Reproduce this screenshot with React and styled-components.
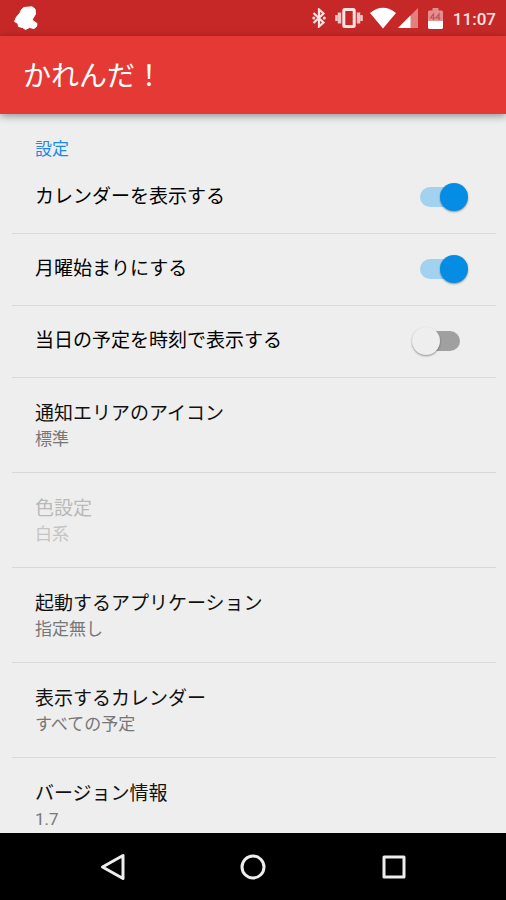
import React, { useState } from "react";
import styled, { createGlobalStyle } from "styled-components";

const GlobalStyle = createGlobalStyle`
  *, *::before, *::after { box-sizing: border-box; }
  body {
    margin: 0;
    background: #eeeeee;
    font-family: Roboto, "Noto Sans CJK JP", sans-serif;
  }
  button { font-family: inherit; }
`;

const Screen = styled.div`
  display: flex;
  flex-direction: column;
  height: 100vh;
  background: #eeeeee;
`;

const StatusBar = styled.div`
  flex: none;
  display: flex;
  align-items: center;
  justify-content: space-between;
  height: 36px;
  padding: 0 10px 0 12px;
  background: #c62828;
  color: #fbe4e4;
`;

const StatusIcons = styled.div`
  display: flex;
  align-items: center;
`;

const StatusIcon = styled.svg`
  display: block;
  margin-right: ${(p) => p.$gap || 0}px;
`;

const Clock = styled.time`
  padding-top: 2px;
  font-size: 17px;
  line-height: 20px;
  font-weight: 500;
`;

const AppBar = styled.header`
  flex: none;
  display: flex;
  align-items: center;
  height: 78px;
  padding: 3px 23px 0;
  background: #e53935;
  box-shadow: 0 2px 8px rgba(0, 0, 0, 0.4);
  z-index: 1;
`;

const AppTitle = styled.h1`
  margin: 0;
  color: #ffffff;
  font-size: 28px;
  line-height: 40px;
  font-weight: 400;
`;

const Settings = styled.main`
  flex: 1;
  min-height: 0;
  overflow: hidden;
  padding: 22px 10px 0 12px;
`;

const SectionTitle = styled.h2`
  margin: 0;
  padding: 0 23px;
  color: #1e88e5;
  font-size: 17px;
  line-height: 26px;
  font-weight: 400;
`;

const List = styled.ul`
  margin: 0;
  padding: 0;
  list-style: none;
`;

const Item = styled.li`
  border-bottom: 1px solid #d8d8d8;
`;

const SwitchRow = styled.label`
  display: flex;
  align-items: center;
  justify-content: space-between;
  height: 71px;
  padding: 0 28px 1px 23px;
  cursor: pointer;
`;

const LinkRow = styled.button`
  display: flex;
  flex-direction: column;
  justify-content: center;
  width: 100%;
  height: 94px;
  padding: 3px 23px 0;
  border: 0;
  background: transparent;
  text-align: left;
  color: #111111;
  cursor: pointer;

  &:disabled {
    color: #b9b9b9;
    cursor: default;
  }
`;

const RowTitle = styled.span`
  font-size: 19px;
  line-height: 26px;
`;

const Summary = styled.span`
  font-size: 17px;
  line-height: 25px;
  color: #777777;

  ${LinkRow}:disabled & {
    color: #c4c4c4;
  }
`;

const Toggle = styled.input`
  appearance: none;
  display: grid;
  align-items: center;
  width: 56px;
  height: 28px;
  margin: 0;
  cursor: pointer;

  &::before,
  &::after {
    content: "";
    grid-area: 1 / 1;
  }
  &::before {
    justify-self: center;
    width: 40px;
    height: 20px;
    border-radius: 10px;
    background: #a0a0a0;
  }
  &::after {
    justify-self: start;
    width: 28px;
    height: 28px;
    border-radius: 50%;
    background: #eeeeee;
    box-shadow: 0 1px 2px rgba(0, 0, 0, 0.4);
  }
  &:checked::before {
    background: #a3d2f1;
  }
  &:checked::after {
    justify-self: end;
    background: #058de5;
  }
`;

const NavBar = styled.nav`
  flex: none;
  display: flex;
  height: 67px;
  padding: 0 42px 0 43px;
  background: #000000;
`;

const NavButton = styled.button`
  flex: 1;
  display: flex;
  align-items: center;
  justify-content: center;
  padding: 0;
  border: 0;
  background: transparent;
  cursor: pointer;
`;

const NavIcon = styled.svg`
  display: block;
  fill: none;
  stroke: #eeeeee;
  stroke-width: 3;
  stroke-linejoin: round;
`;

const switches = [
  { title: "カレンダーを表示する", on: true },
  { title: "月曜始まりにする", on: true },
  { title: "当日の予定を時刻で表示する", on: false },
];

const links = [
  { title: "通知エリアのアイコン", summary: "標準" },
  { title: "色設定", summary: "白系", disabled: true },
  { title: "起動するアプリケーション", summary: "指定無し" },
  { title: "表示するカレンダー", summary: "すべての予定" },
  { title: "バージョン情報", summary: "1.7" },
];

function SwitchItem({ title, on }) {
  const [checked, setChecked] = useState(on);
  return (
    <Item>
      <SwitchRow>
        <RowTitle>{title}</RowTitle>
        <Toggle
          type="checkbox"
          role="switch"
          checked={checked}
          onChange={(e) => setChecked(e.target.checked)}
        />
      </SwitchRow>
    </Item>
  );
}

export default function App() {
  return (
    <Screen>
      <GlobalStyle />
      <StatusBar>
        <StatusIcon width="28" height="28" viewBox="0 0 28 28" aria-hidden="true">
          <path
            d="M9.500 5.500 L12 3.500 L20 2.800 L23 5 L23.500 10 L21.500 13.500 L20 16 L25 19.500 L24.500 22.500 L22 24.500 L17.500 23.500 L13.500 25.500 L10.500 23.500 L6.500 22.500 L6 19.500 L2.500 17.500 L4.500 13 L8 9 Z"
            fill="#ffffff"
            stroke="#ffffff"
            strokeLinejoin="round"
          />
        </StatusIcon>
        <StatusIcons>
          <StatusIcon $gap={9} width="14" height="20" viewBox="0 0 14 20" aria-hidden="true">
            <path
              d="M1.500 5 L11.500 14.500 L7 18.500 V1.500 L11.500 5.500 L1.500 15"
              fill="none"
              stroke="#fbe4e4"
              strokeWidth="2.200"
            />
            <circle cx="1.800" cy="10" r="1.500" fill="#fbe4e4" />
            <circle cx="12.300" cy="10" r="1.500" fill="#fbe4e4" />
          </StatusIcon>
          <StatusIcon $gap={7} width="28" height="20" viewBox="0 0 28 20" aria-hidden="true">
            <rect x="8.800" y="1.500" width="10.400" height="17" rx="1" fill="none" stroke="#fbe4e4" strokeWidth="3" />
            <path d="M4.500 4.500 V15.500 M23.500 4.500 V15.500" stroke="#f3c5c5" strokeWidth="3.400" />
            <path d="M1.500 7 V13 M26.500 7 V13" stroke="#f3c5c5" strokeWidth="2.600" />
          </StatusIcon>
          <StatusIcon $gap={2} width="26" height="22" viewBox="0 0 26 22" aria-hidden="true">
            <path d="M0 6 Q13 -4.500 26 6 L13 21.500 Z" fill="#ffffff" />
          </StatusIcon>
          <StatusIcon $gap={10} width="20" height="20" viewBox="0 0 20 20" aria-hidden="true">
            <path d="M0 20 L20 0 V20 Z" fill="#e27f7f" />
            <path d="M0 20 L12.500 7.500 V20 Z" fill="#ffffff" />
          </StatusIcon>
          <StatusIcon $gap={10} width="15" height="21" viewBox="0 0 15 21" aria-hidden="true">
            <path d="M1 2.500 H4.500 V0 H10.500 V2.500 H14 L15 3.500 V12 H0 V3.500 Z" fill="#e58e8e" />
            <path d="M0 12.500 H15 V20 L14 21 H1 L0 20 Z" fill="#ffffff" />
            <path
              d="M5.500 12 V6 L2.500 10 H7 M11 12 V6 L8 10 H12.500"
              fill="none"
              stroke="#c75050"
              strokeWidth="1.200"
            />
          </StatusIcon>
          <Clock>11:07</Clock>
        </StatusIcons>
      </StatusBar>
      <AppBar>
        <AppTitle>かれんだ！</AppTitle>
      </AppBar>
      <Settings>
        <SectionTitle>設定</SectionTitle>
        <List>
          {switches.map((s) => (
            <SwitchItem key={s.title} {...s} />
          ))}
          {links.map((l) => (
            <Item key={l.title}>
              <LinkRow type="button" disabled={l.disabled}>
                <RowTitle>{l.title}</RowTitle>
                <Summary>{l.summary}</Summary>
              </LinkRow>
            </Item>
          ))}
        </List>
      </Settings>
      <NavBar>
        <NavButton type="button" aria-label="戻る">
          <NavIcon width="28" height="28" viewBox="0 0 28 28">
            <path d="M24 2.500 V25.500 L3.500 14 Z" />
          </NavIcon>
        </NavButton>
        <NavButton type="button" aria-label="ホーム">
          <NavIcon width="28" height="28" viewBox="0 0 28 28">
            <circle cx="14" cy="14" r="11" />
          </NavIcon>
        </NavButton>
        <NavButton type="button" aria-label="履歴">
          <NavIcon width="28" height="28" viewBox="0 0 28 28">
            <rect x="4" y="4" width="20" height="20" />
          </NavIcon>
        </NavButton>
      </NavBar>
    </Screen>
  );
}
